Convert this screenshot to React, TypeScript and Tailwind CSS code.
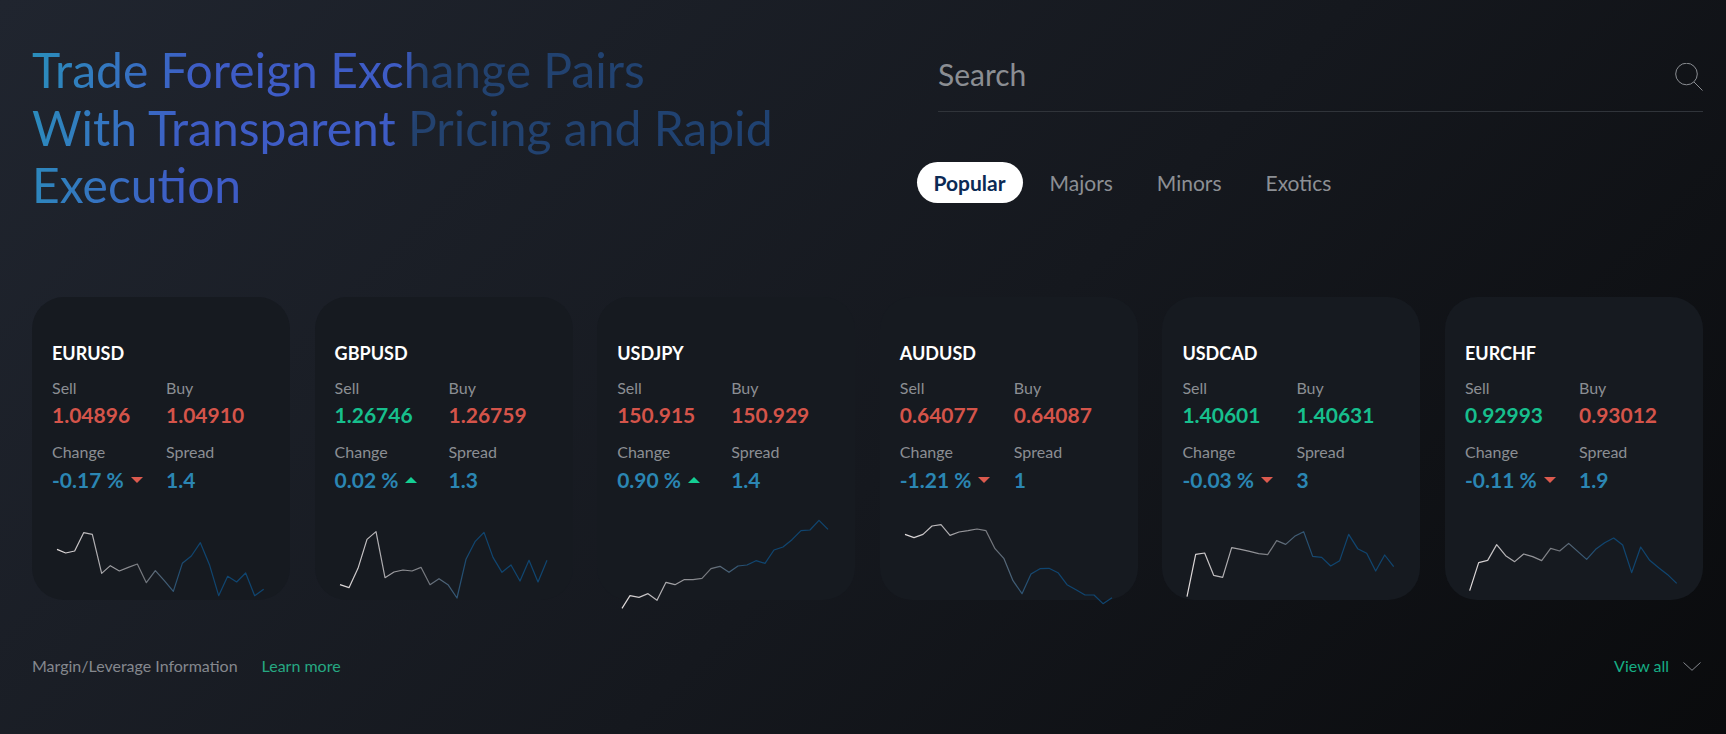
type Pair = {
  name: string;
  sell: string;
  buy: string;
  sellUp: boolean;
  buyUp: boolean;
  change: string;
  up: boolean;
  spread: string;
  left: number;
  line: number[][];
};

const pairs: Pair[] = [
  {
    name: 'EURUSD', sell: '1.04896', buy: '1.04910', sellUp: false, buyUp: false, change: '-0.17 %', up: false, spread: '1.4', left: 97,
    line: [[112,778],[138,789],[165,783],[192,728],[218,733],[246,850],[272,827],[299,843],[326,832],[353,822],[380,878],[407,842],[434,872],[461,904],[488,820],[515,798],[542,758],[570,826],[597,917],[624,859],[651,876],[678,849],[705,917],[732,898]],
  },
  {
    name: 'GBPUSD', sell: '1.26746', buy: '1.26759', sellUp: true, buyUp: false, change: '0.02 %', up: true, spread: '1.3', left: 105,
    line: [[120,884],[147,893],[174,835],[201,748],[228,725],[255,863],[282,846],[309,840],[336,843],[363,832],[390,884],[417,866],[444,884],[471,924],[498,808],[525,755],[552,727],[579,802],[606,847],[633,825],[660,873],[687,811],[714,876],[741,811]],
  },
  {
    name: 'USDJPY', sell: '150.915', buy: '150.929', sellUp: false, buyUp: false, change: '0.90 %', up: true, spread: '1.4', left: 83,
    line: [[98,955],[122,917],[149,922],[176,911],[203,931],[230,877],[257,884],[284,869],[311,869],[338,865],[365,836],[392,829],[419,847],[446,828],[473,825],[500,812],[527,820],[554,780],[581,771],[608,749],[635,722],[662,720],[689,691],[716,718]],
  },
  {
    name: 'AUDUSD', sell: '0.64077', buy: '0.64087', sellUp: false, buyUp: false, change: '-1.21 %', up: false, spread: '1', left: 90,
    line: [[105,733],[132,743],[159,733],[186,708],[213,704],[240,736],[267,726],[294,722],[321,717],[348,722],[375,776],[402,806],[429,872],[456,911],[483,852],[510,836],[537,835],[564,848],[591,884],[618,899],[645,915],[672,915],[699,941],[726,923]],
  },
  {
    name: 'USDCAD', sell: '1.40601', buy: '1.40631', sellUp: true, buyUp: true, change: '-0.03 %', up: false, spread: '3', left: 100,
    line: [[115,920],[141,793],[168,789],[195,856],[222,862],[249,773],[276,778],[303,784],[330,791],[357,794],[384,752],[411,763],[438,739],[465,725],[492,799],[519,802],[546,828],[573,812],[600,733],[627,776],[654,790],[681,843],[708,795],[735,830]],
  },
  {
    name: 'EURCHF', sell: '0.92993', buy: '0.93012', sellUp: true, buyUp: false, change: '-0.11 %', up: false, spread: '1.9', left: 107,
    line: [[121,902],[148,818],[175,811],[202,764],[229,797],[256,815],[283,792],[310,800],[337,812],[364,775],[391,783],[418,760],[445,784],[472,808],[499,778],[526,758],[553,744],[580,765],[607,848],[634,771],[661,811],[688,833],[715,854],[742,880]],
  },
];

function Sparkline({ pair }: { pair: Pair }) {
  const points = pair.line
    .map(([x, y]) => `${(x - pair.left) / 3 + 20},${y / 3 + 290 - 495}`)
    .join(' ');
  const id = `spark-${pair.name}`;

  return (
    <svg viewBox="0 0 258 105" className="mt-auto block h-[105px] w-[258px] overflow-visible" fill="none">
      <defs>
        <linearGradient id={id} gradientUnits="userSpaceOnUse" x1="20" y1="0" x2="240" y2="0">
          <stop offset="0" stopColor="#e8e2e2" />
          <stop offset="0.42" stopColor="#73767c" />
          <stop offset="0.62" stopColor="#0f4570" />
          <stop offset="1" stopColor="#0f4570" />
        </linearGradient>
      </defs>
      <polyline points={points} stroke={`url(#${id})`} strokeWidth="1.2" strokeLinejoin="round" />
    </svg>
  );
}

function PriceCard({ pair }: { pair: Pair }) {
  return (
    <div className="flex h-[303px] w-[258px] shrink-0 flex-col rounded-[32px] bg-[#161a20] pt-[44px]">
      <div className="pl-5 text-[18px] leading-[24px] font-bold text-white">{pair.name}</div>
      <div className="mt-[12px] grid grid-cols-[114px_1fr] pl-5 text-[16px] leading-[22px] text-[#8b8e93]">
        <span>Sell</span>
        <span>Buy</span>
      </div>
      <div className="mt-[1px] grid grid-cols-[114px_1fr] pl-5 text-[21px] leading-[30px] font-bold">
        <span className={pair.sellUp ? 'text-[#17bf8d]' : 'text-[#d4544a]'}>{pair.sell}</span>
        <span className={pair.buyUp ? 'text-[#17bf8d]' : 'text-[#d4544a]'}>{pair.buy}</span>
      </div>
      <div className="mt-[11px] grid grid-cols-[114px_1fr] pl-5 text-[16px] leading-[22px] text-[#8b8e93]">
        <span>Change</span>
        <span>Spread</span>
      </div>
      <div className="mt-[2px] grid grid-cols-[114px_1fr] pl-5 text-[21px] leading-[30px] font-bold text-[#2b86b3]">
        <span className="flex items-center gap-[7px]">
          {pair.change}
          {pair.up ? (
            <span className="h-0 w-0 border-x-[6px] border-b-[6px] border-x-transparent border-b-[#14cf93]" />
          ) : (
            <span className="h-0 w-0 border-x-[6px] border-t-[6px] border-x-transparent border-t-[#dc5a4e]" />
          )}
        </span>
        <span>{pair.spread}</span>
      </div>
      <Sparkline pair={pair} />
    </div>
  );
}

export default function App() {
  return (
    <div className="flex h-[734px] w-full flex-col overflow-hidden bg-[linear-gradient(135deg,#20252f_0%,#15181e_55%,#0a0b0d_100%)] pt-[41px] pr-[23px] pl-8 font-['Lato',sans-serif]">
      <div className="flex">
        <h1 className="w-[780px] shrink-0 bg-[linear-gradient(100deg,#2a8fbb_0px,#3e5cc6_170px,#3e5cc6_368px,#23426f_392px,#1f4272_780px)] bg-clip-text text-[48px] leading-[57.6px] font-normal text-transparent">
          Trade Foreign Exchange Pairs
          <br />
          With Transparent Pricing and Rapid
          <br />
          Execution
        </h1>

        <div className="mt-[2px] ml-[126px] flex-1">
          <div className="flex h-[69px] items-center justify-between border-b border-[#30343a] pb-[6px]">
            <span className="text-[30px] font-normal text-[#8b8e93]">Search</span>
            <svg viewBox="0 0 28 28" className="mt-[6px] h-[28px] w-[28px]" fill="none" stroke="#8b8e93" strokeWidth="1">
              <circle cx="11.5" cy="11" r="10.8" />
              <path d="M19 19 L27.5 27.5" />
            </svg>
          </div>
          <div className="mt-[50px] -ml-[21.5px] flex items-center gap-[10px] text-[21px] text-[#8c8f94]">
            <span className="flex h-[41px] items-center rounded-[21px] bg-white px-[17px] font-bold text-[#0b2a55]">Popular</span>
            <span className="px-[17px]">Majors</span>
            <span className="px-[17px]">Minors</span>
            <span className="px-[17px]">Exotics</span>
          </div>
        </div>
      </div>

      <div className="mt-[83.2px] flex gap-[24.6px]">
        {pairs.map((pair) => (
          <PriceCard key={pair.name} pair={pair} />
        ))}
      </div>

      <div className="mt-[53.8px] flex items-center text-[16px] leading-[24px]">
        <span className="text-[#85888e]">Margin/Leverage Information</span>
        <a className="ml-6 text-[#26a882]">Learn more</a>
        <a className="ml-auto text-[#16ad84]">View all</a>
        <svg viewBox="0 0 18 9" className="mt-[2px] mr-[2px] ml-[14px] h-[9px] w-[18px]" fill="none">
          <path d="M0.5 0.5 L9 8.3 L17.5 0.5" stroke="#85888e" strokeWidth="1" />
        </svg>
      </div>
    </div>
  );
}
